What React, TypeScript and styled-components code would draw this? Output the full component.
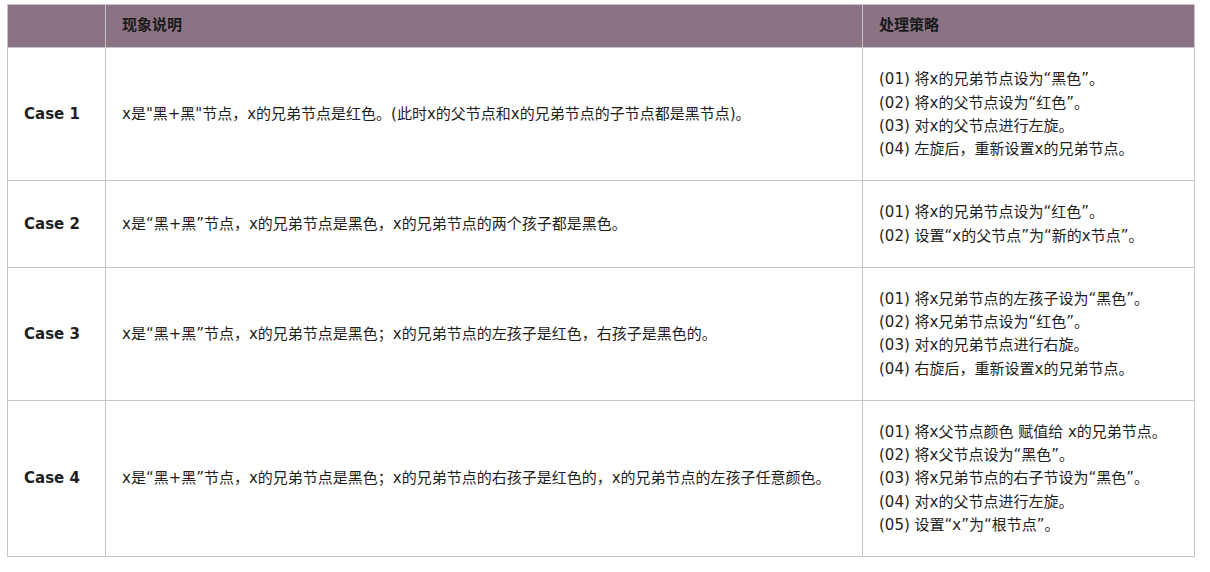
import React from "react";
import styled, { createGlobalStyle } from "styled-components";

const Global = createGlobalStyle`
  html, body { margin: 0; padding: 0; background: #fff; }
`;

const Page = styled.div`
  padding: 4px 0 0 7px;
  font-family: "DejaVu Sans", Verdana, "Noto Sans CJK SC", sans-serif;
  font-size: 15px;
  line-height: 23.25px;
  color: #1e1e1e;
  text-spacing-trim: space-all;
  font-feature-settings: "fwid" 1;
`;

const Table = styled.table`
  width: 1187px;
  border-collapse: collapse;
  table-layout: fixed;
`;

const HeadCell = styled.th`
  background: #8c7383;
  border: 1px solid #c9c3c7;
  padding: 9px 16px 10px;
  text-align: left;
  font-weight: bold;
  color: #1a1a1a;
`;

const Cell = styled.td<{ $bold?: boolean }>`
  border: 1px solid #c6c6c6;
  padding: 20px 16px 19px;
  vertical-align: middle;
  font-weight: ${(p) => (p.$bold ? "bold" : "normal")};
`;

const Step = styled.div`
  white-space: nowrap;
`;

const rows: { c: string; d: string; steps: string[] }[] = [
  {
    c: "Case 1",
    d: "x是\"黑+黑\"节点，x的兄弟节点是红色。(此时x的父节点和x的兄弟节点的子节点都是黑节点)。",
    steps: [
      "(01) 将x的兄弟节点设为“黑色”。",
      "(02) 将x的父节点设为“红色”。",
      "(03) 对x的父节点进行左旋。",
      "(04) 左旋后，重新设置x的兄弟节点。",
    ],
  },
  {
    c: "Case 2",
    d: "x是“黑+黑”节点，x的兄弟节点是黑色，x的兄弟节点的两个孩子都是黑色。",
    steps: ["(01) 将x的兄弟节点设为“红色”。", "(02) 设置“x的父节点”为“新的x节点”。"],
  },
  {
    c: "Case 3",
    d: "x是“黑+黑”节点，x的兄弟节点是黑色；x的兄弟节点的左孩子是红色，右孩子是黑色的。",
    steps: [
      "(01) 将x兄弟节点的左孩子设为“黑色”。",
      "(02) 将x兄弟节点设为“红色”。",
      "(03) 对x的兄弟节点进行右旋。",
      "(04) 右旋后，重新设置x的兄弟节点。",
    ],
  },
  {
    c: "Case 4",
    d: "x是“黑+黑”节点，x的兄弟节点是黑色；x的兄弟节点的右孩子是红色的，x的兄弟节点的左孩子任意颜色。",
    steps: [
      "(01) 将x父节点颜色 赋值给 x的兄弟节点。",
      "(02) 将x父节点设为“黑色”。",
      "(03) 将x兄弟节点的右子节设为“黑色”。",
      "(04) 对x的父节点进行左旋。",
      "(05) 设置“x”为“根节点”。",
    ],
  },
];

export default function App() {
  return (
    <Page lang="zh-CN">
      <Global />
      <Table>
        <colgroup>
          <col style={{ width: 98 }} />
          <col style={{ width: 757 }} />
          <col style={{ width: 332 }} />
        </colgroup>
        <thead>
          <tr>
            <HeadCell></HeadCell>
            <HeadCell>现象说明</HeadCell>
            <HeadCell>处理策略</HeadCell>
          </tr>
        </thead>
        <tbody>
          {rows.map((r) => (
            <tr key={r.c}>
              <Cell $bold>{r.c}</Cell>
              <Cell>{r.d}</Cell>
              <Cell>
                {r.steps.map((s) => (
                  <Step key={s}>{s}</Step>
                ))}
              </Cell>
            </tr>
          ))}
        </tbody>
      </Table>
    </Page>
  );
}
